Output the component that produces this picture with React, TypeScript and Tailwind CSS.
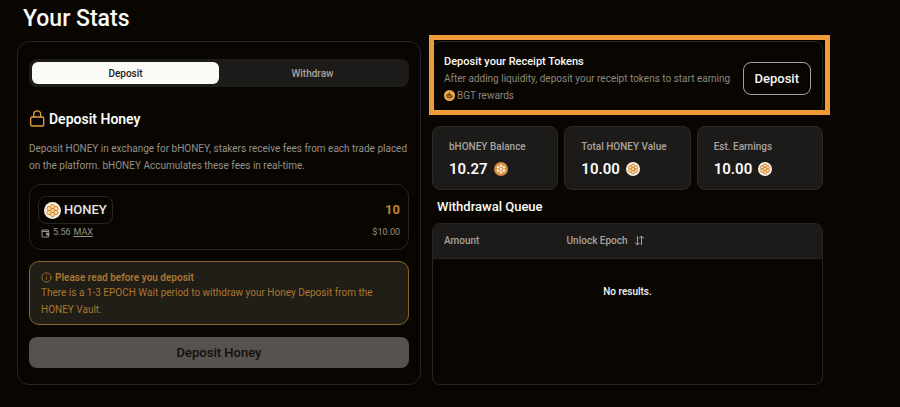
import React from "react";
import { Info } from "lucide-react";

type CoinProps = {
  className: string;
  disc: string;
  cell: string;
  line: string;
};

const cells = [
  [12, 12],
  [12, 6.4],
  [12, 17.6],
  [7.1, 9.2],
  [7.1, 14.8],
  [16.9, 9.2],
  [16.9, 14.8],
];

const Coin = ({ className, disc, cell, line }: CoinProps) => (
  <svg viewBox="0 0 24 24" className={className} aria-hidden="true">
    <circle cx="12" cy="12" r="12" fill={disc} />
    {cells.map(([x, y]) => (
      <path
        key={`${x}-${y}`}
        d={`M${x - 3.2} ${y}l1.6-2.8h3.2l1.6 2.8-1.6 2.8h-3.2z`}
        fill={cell}
        stroke={line}
        strokeWidth="1.4"
        strokeLinejoin="round"
      />
    ))}
  </svg>
);

const HoneyIcon = ({ className }: { className: string }) => (
  <Coin className={className} disc="#f8f0e3" cell="#f6d6a4" line="#d2842b" />
);

const BHoneyIcon = ({ className }: { className: string }) => (
  <Coin className={className} disc="#d08a3c" cell="#fdeccf" line="#d99a4e" />
);

const BgtIcon = () => (
  <svg viewBox="0 0 24 24" className="size-[11px] shrink-0" aria-hidden="true">
    <circle cx="12" cy="12" r="12" fill="#e9a850" />
    <path
      d="M5 12c0-2 2-3 3.500-2.500L12 5l2 3.500L16 9l-.5 2c2 .5 3.500 1 3.500 2.500 0 3-3 5-7 5s-7-2.500-7-6.500z"
      fill="#7a4a16"
    />
    <path d="M8 13.500h7" stroke="#e9a850" strokeWidth="1.500" />
  </svg>
);

const LockIcon = () => (
  <svg
    viewBox="0 0 16 18"
    className="h-[18px] w-4 shrink-0"
    fill="none"
    stroke="#e3a240"
    strokeWidth="1.300"
    aria-hidden="true"
  >
    <rect x="1.700" y="7" width="13" height="9" rx="1.300" />
    <path d="M4.700 7V4.300a3.500 3.500 0 0 1 7 0V7" />
  </svg>
);

const WalletIcon = () => (
  <svg
    viewBox="0 0 18 18"
    className="size-[9px]"
    fill="none"
    stroke="currentColor"
    strokeWidth="2"
    aria-hidden="true"
  >
    <path d="M15 7V2H2v14h13v-4M2 5h13" />
    <path d="M11 8h5v4h-5z" fill="currentColor" />
  </svg>
);

const SortIcon = () => (
  <svg
    viewBox="0 0 11 11"
    className="size-[11px]"
    fill="none"
    stroke="currentColor"
    aria-hidden="true"
  >
    <path d="M3.500 1v9M1 7.500L3.500 10 6 7.500M7.500 10V1M5 3.500L7.500 1 10 3.500" />
  </svg>
);

const stats = [
  { label: "bHONEY Balance", value: "10.27", Icon: BHoneyIcon },
  { label: "Total HONEY Value", value: "10.00", Icon: HoneyIcon },
  { label: "Est. Earnings", value: "10.00", Icon: HoneyIcon },
];

const DepositPanel = () => {
  return (
    <section className="rounded-xl border border-[#272421] px-[11px] pt-[17px] pb-4">
      <div className="grid h-7 grid-cols-2 rounded-lg bg-[#1d1b19] p-[3px] text-[10px] font-medium">
        <button className="rounded-md bg-[#fafaf7] text-[#1c1917]">Deposit</button>
        <button className="rounded-md text-[#a8a29e]">Withdraw</button>
      </div>

      <h2 className="mt-[22px] flex h-5 items-center gap-1 text-[14px] font-semibold text-[#fafaf9]">
        <LockIcon />
        Deposit Honey
      </h2>
      <p className="mt-[11px] text-[10px] leading-[17px] text-[#96918b]">
        Deposit HONEY in exchange for bHONEY, stakers receive fees from each
        trade placed on the platform. bHONEY Accumulates these fees in
        real-time.
      </p>

      <div className="mt-[10px] rounded-xl border border-[#272421] px-2 pt-[11px] pb-[9px]">
        <div className="flex items-center justify-between">
          <button className="flex h-7 items-center gap-[3px] rounded-lg border border-[#272421] px-[5px] text-[13px] font-medium text-[#e7e5e4]">
            <HoneyIcon className="size-[17px]" />
            HONEY
          </button>
          <input
            aria-label="Amount to deposit"
            defaultValue="10"
            className="w-24 bg-transparent text-right text-[13px] font-bold text-[#bd8436] outline-none"
          />
        </div>
        <div className="mt-[2px] flex h-[14px] items-center justify-between text-[9px] text-[#96918b]">
          <div className="flex items-center gap-[3px] pl-[3px]">
            <WalletIcon />
            <span>5.56</span>
            <button className="underline">MAX</button>
          </div>
          <span>$10.00</span>
        </div>
      </div>

      <div className="mt-[11px] rounded-[10px] border border-[#8a6528] bg-[#211d17] px-[11px] pt-2 pb-[6px] text-[10px] text-[#a97731]">
        <div className="flex h-[14px] items-center gap-[3px] font-semibold">
          <Info className="size-[11px]" />
          Please read before you deposit
        </div>
        <p className="leading-[17px]">
          There is a 1-3 EPOCH Wait period to withdraw your Honey Deposit from
          the HONEY Vault.
        </p>
      </div>

      <button className="mt-3 h-[31px] w-full rounded-lg bg-[#56524e] text-[13px] font-medium text-[#120f0c]">
        Deposit Honey
      </button>
    </section>
  );
};

const ReceiptBanner = () => {
  return (
    <section className="relative flex h-[72px] items-center justify-between rounded-lg border border-[#272421] px-[11px]">
      <div className="pt-1">
        <h2 className="text-[11px] leading-[16px] font-medium text-[#fafaf9]">
          Deposit your Receipt Tokens
        </h2>
        <p className="text-[10px] leading-[17px] text-[#8b8680]">
          After adding liquidity, deposit your receipt tokens to start earning
        </p>
        <p className="flex items-center gap-[2px] text-[10px] leading-[17px] text-[#8b8680]">
          <BgtIcon />
          BGT rewards
        </p>
      </div>
      <button className="mt-[3px] h-[33px] shrink-0 rounded-lg border border-[#a8a29e] px-[11px] text-[13px] font-medium text-[#f5f5f4]">
        Deposit
      </button>
      {/* highlight frame */}
      <div className="pointer-events-none absolute -top-[7px] -right-2 -bottom-[3px] -left-1 border-[5px] border-[#f09a38]" />
    </section>
  );
};

const WithdrawalQueue = () => {
  return (
    <div className="flex-1 overflow-hidden rounded-lg border border-[#272421]">
      <table className="w-full table-fixed text-left text-[10px] font-medium">
        <thead className="border-b border-[#272421] bg-[#1d1b19] text-[#a8a29e]">
          <tr className="h-[34px]">
            <th className="w-[31%] pl-[11px] font-medium">Amount</th>
            <th className="pl-[13px] font-medium">
              <button className="flex items-center gap-[6px]">
                Unlock Epoch
                <SortIcon />
              </button>
            </th>
          </tr>
        </thead>
        <tbody>
          <tr>
            <td colSpan={2} className="h-[66px] text-center text-[#f5f5f4]">
              No results.
            </td>
          </tr>
        </tbody>
      </table>
    </div>
  );
};

const App = () => {
  return (
    <main className="min-h-screen bg-[#090602] pt-1 pr-[77px] pb-5 pl-[17px] font-['Roboto','Noto_Sans',sans-serif]">
      <h1 className="pl-[6px] text-[23px] leading-[30px] font-medium text-[#fafaf9]">
        Your Stats
      </h1>
      <div className="mt-[7px] grid grid-cols-[404fr_391fr] gap-[11px]">
        <DepositPanel />
        <div className="flex min-w-0 flex-col">
          <ReceiptBanner />
          <div className="mt-[13px] grid grid-cols-3 gap-[6px]">
            {stats.map(({ label, value, Icon }) => (
              <div
                key={label}
                className="h-16 rounded-lg border border-[#2b2825] bg-[#1d1b19] px-4 pt-3"
              >
                <div className="text-[10px] leading-[16px] font-medium text-[#a8a29e]">
                  {label}
                </div>
                <div className="mt-1 flex items-center gap-[6px] text-[15px] leading-[20px] font-semibold text-[#fafaf9]">
                  {value}
                  <Icon className="size-[14px]" />
                </div>
              </div>
            ))}
          </div>
          <h2 className="mt-2 mb-[7px] pl-[5px] text-[13px] leading-[18px] font-medium text-[#fafaf9]">
            Withdrawal Queue
          </h2>
          <WithdrawalQueue />
        </div>
      </div>
    </main>
  );
};

export default App;
